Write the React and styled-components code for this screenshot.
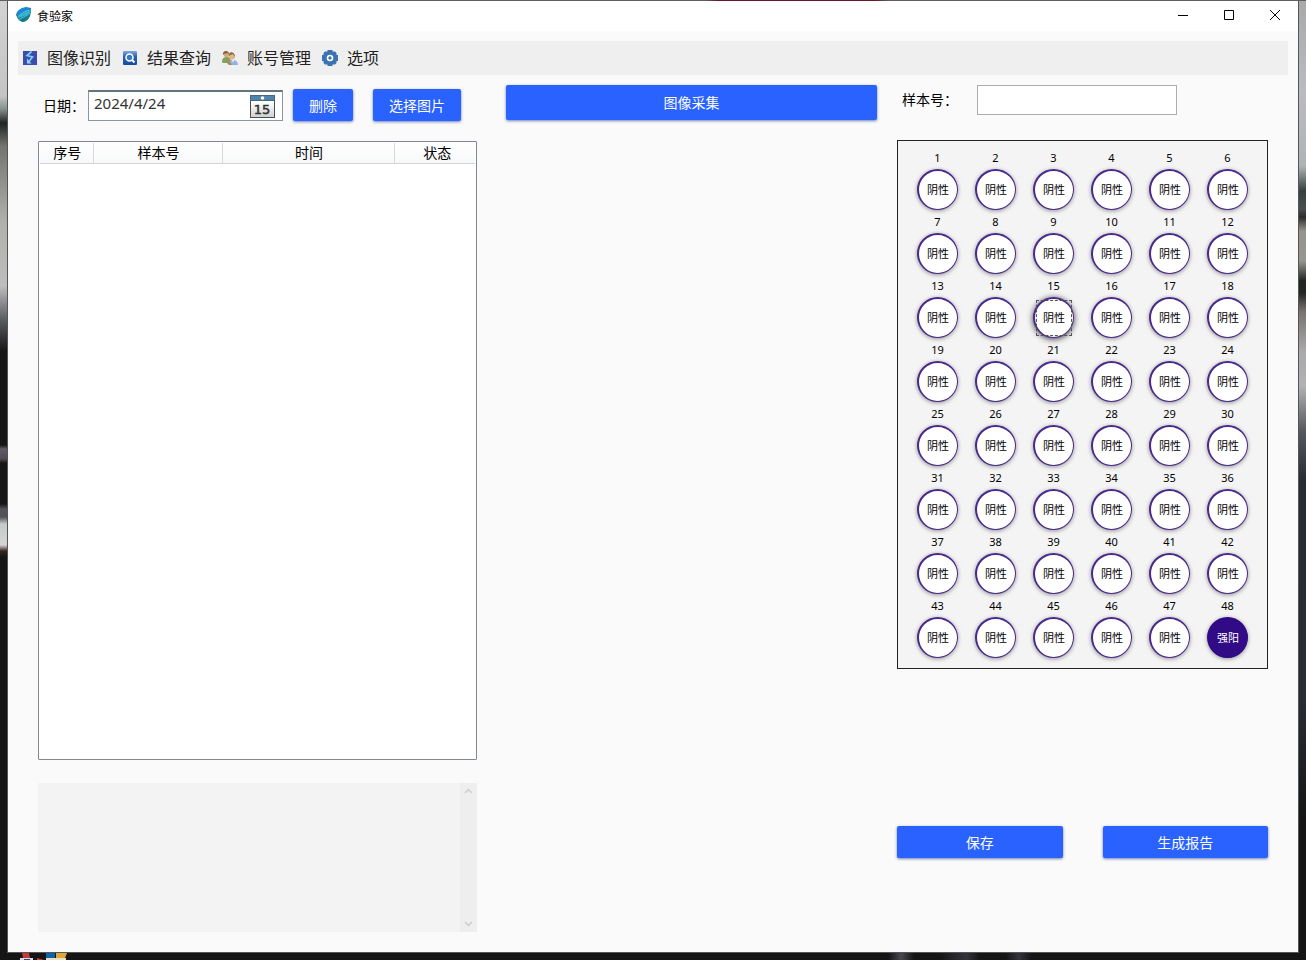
import React, { useState } from "react";
import styled, { createGlobalStyle, css } from "styled-components";

const wells = Array.from({ length: 48 }, (_, i) => ({
  no: i + 1,
  positive: i === 47,
}));

const columns = [
  { title: "序号", width: "53px" },
  { title: "样本号", width: "129px" },
  { title: "时间", width: "172px" },
  { title: "状态", width: "auto" },
];

//=================================
//       Icons
//=================================

const LogoIcon = () => (
  <svg width="16" height="16" viewBox="0 0 16 16">
    <path d="M0 8L1 5L3 3L6 1L10 0L15 1L15 5L14 9L12 12L10 14L7 15L4 14L2 12L1 10Z" fill="#1583a6" />
    <path d="M1 7L3 3L7 1L13 1L10 4L5 7L2 8Z" fill="#1788dd" />
    <path d="M2 11C5 6 11 6 15 2C15 7 8 9 2 11Z" fill="#37b7dc" />
    <path d="M3 13C7 11 12 10 14 7C14 11 11 14 7 15Z" fill="#127f7d" />
    <path d="M2 9.500C6 6 9 4.500 13 3" stroke="#9be3f0" strokeWidth=".7" fill="none" />
    <path d="M3 12.500C7 10 11 9 14 6" stroke="#6fd3cf" strokeWidth=".7" fill="none" />
  </svg>
);

const FlashIcon = () => (
  <svg width="16" height="16" viewBox="0 0 16 16">
    <rect x="1" y="1" width="14" height="14" fill="#3b4cab" />
    <path d="M9.500 1.500L5 5.500L10.500 7L6.500 12" fill="none" stroke="#7ecbfa" strokeWidth="1.700" />
    <path d="M5 8.500V13.500H9.500Z" fill="#8fd5ff" />
  </svg>
);

const SearchIcon = () => (
  <svg width="16" height="16" viewBox="0 0 16 16">
    <defs>
      <linearGradient id="searchBg" x2="0" y2="1">
        <stop stopColor="#82abdd" />
        <stop offset=".4" stopColor="#2a62b2" />
        <stop offset="1" stopColor="#164b9d" />
      </linearGradient>
    </defs>
    <rect x="1" y="1" width="14" height="14" rx="1" fill="url(#searchBg)" />
    <circle cx="7.500" cy="7.500" r="3.500" fill="#3c78c3" stroke="#fff" strokeWidth="1.500" />
    <path d="M10 10L12.500 12.500" stroke="#fff" strokeWidth="2" />
  </svg>
);

const UsersIcon = () => (
  <svg width="16" height="16" viewBox="0 0 16 16">
    <path d="M0 12C0 8 2 7 5 7C8 7 9 9 9 13H1Z" fill="#83a35c" />
    <circle cx="4.500" cy="4.500" r="2.800" fill="#d7a879" />
    <path d="M1 5C0 0 7 0 7 4L5 3L2 4Z" fill="#85613c" />
    <path d="M7 15C7 11 8 10 11 10C14 10 16 12 16 15Z" fill="#93b4d9" />
    <circle cx="10" cy="6.500" r="3" fill="#dfb587" />
    <path d="M7 6C6 1 13 1 13 7L11 4L8 5Z" fill="#896640" />
    <path d="M6 9L10 15L7 15L4 12Z" fill="#a88958" />
    <path d="M10 10L11 13L12 10Z" fill="#eef5f9" />
  </svg>
);

const GearIcon = () => (
  <svg width="16" height="16" viewBox="0 0 16 16">
    <path
      d="M5.500 0H10.500V1.500H12L13 1.500L14.500 3V5H16V11H14.500V13L13 14.500H10.500V16H5.500V14.500H3L1.500 13V11H0V5H1.500V3L3 1.500H5.500Z"
      fill="#3c72b4"
    />
    <circle cx="8" cy="8" r="2.500" fill="#3c72b4" stroke="#fff" strokeWidth="1.600" />
  </svg>
);

const CalendarIcon = () => (
  <svg width="26" height="26" viewBox="0 0 26 26">
    <defs>
      <linearGradient id="calendarPaper" x2="0" y2="1">
        <stop offset=".3" stopColor="#fff" />
        <stop offset="1" stopColor="#cfcfcf" />
      </linearGradient>
    </defs>
    <rect x="1.500" y="2.500" width="24" height="22" fill="url(#calendarPaper)" stroke="#4b4d50" />
    <rect x="1.500" y="2.500" width="24" height="5" fill="#5084ad" stroke="#466780" />
    <circle cx="13.500" cy="5" r="1.800" fill="#fff" />
    <text x="13" y="21" textAnchor="middle" fontFamily="DejaVu Sans" fontSize="13" fill="#333" stroke="#333" strokeWidth=".5">15</text>
  </svg>
);

const Arrow = ({ down }) => (
  <svg width="9" height="6" viewBox="0 0 9 6">
    <path d={down ? "M1 1L4.500 4.500L8 1" : "M1 5L4.500 1.500L8 5"} fill="none" stroke="#cecece" strokeWidth="1.500" />
  </svg>
);

const menus = [
  { text: "图像识别", icon: <FlashIcon /> },
  { text: "结果查询", icon: <SearchIcon /> },
  { text: "账号管理", icon: <UsersIcon /> },
  { text: "选项", icon: <GearIcon /> },
];

const App = () => {
  // State
  const [date, setDate] = useState("2024/4/24");
  const [sampleNo, setSampleNo] = useState("");
  const [current, setCurrent] = useState(15);

  return (
    <Desktop>
      <GlobalStyle />
      <TopEdge />
      <DesktopEdge $side="left" />
      <Window>
        <TitleBar>
          <LogoIcon />
          <Title>食验家</Title>
          <WindowButton aria-label="最小化">
            <svg width="10" height="10"><path d="M0 5.500H10" stroke="#000" /></svg>
          </WindowButton>
          <WindowButton aria-label="最大化">
            <svg width="10" height="10"><path d="M.5.5H9.500V9.500H.5Z" fill="none" stroke="#000" /></svg>
          </WindowButton>
          <WindowButton aria-label="关闭">
            <svg width="10" height="10"><path d="M0 0L10 10M10 0L0 10" stroke="#000" /></svg>
          </WindowButton>
        </TitleBar>

        <MenuBar>
          {menus.map((menu) => (
            <MenuButton key={menu.text}>
              {menu.icon}
              <MenuText>{menu.text}</MenuText>
            </MenuButton>
          ))}
        </MenuBar>

        <Content>
          <LeftPanel>
            <FilterRow>
              <FieldLabel htmlFor="date">日期：</FieldLabel>
              <DateBox>
                <DateInput id="date" value={date} onChange={(e) => setDate(e.target.value)} />
                <CalendarButton aria-label="打开日历"><CalendarIcon /></CalendarButton>
              </DateBox>
              <DeleteButton>删除</DeleteButton>
              <PickButton>选择图片</PickButton>
            </FilterRow>
            <TableFrame>
              <Table>
                <thead>
                  <tr>
                    {columns.map((col) => (
                      <HeadCell key={col.title} $width={col.width}>{col.title}</HeadCell>
                    ))}
                  </tr>
                </thead>
                <tbody />
              </Table>
            </TableFrame>
            <LogBox>
              <LogText aria-label="日志" readOnly />
              <ScrollBar>
                <Arrow />
                <Arrow down />
              </ScrollBar>
            </LogBox>
          </LeftPanel>

          <CenterPanel>
            <CaptureButton>图像采集</CaptureButton>
          </CenterPanel>

          <RightPanel>
            <SampleRow>
              <SampleLabel htmlFor="sample">样本号：</SampleLabel>
              <SampleInput id="sample" value={sampleNo} onChange={(e) => setSampleNo(e.target.value)} />
            </SampleRow>
            <WellGrid>
              {wells.map((well) => (
                <Well key={well.no}>
                  <WellNo>{well.no}</WellNo>
                  <WellButton
                    $positive={well.positive}
                    $current={well.no === current}
                    onClick={() => setCurrent(well.no)}
                  >
                    {well.positive ? "强阳" : "阴性"}
                  </WellButton>
                </Well>
              ))}
            </WellGrid>
            <ActionRow>
              <ActionButton>保存</ActionButton>
              <ActionButton>生成报告</ActionButton>
            </ActionRow>
          </RightPanel>
        </Content>
      </Window>
      <DesktopEdge $side="right" />
      <BottomEdge>
        <svg width="50" height="7" viewBox="0 0 50 7">
          <path d="M2 0H9L10 5H3Z" fill="#c43a3e" />
          <path d="M0 5H13V7H0Z" fill="#dadbe3" />
          <path d="M4 6H10V7H4Z" fill="#34456c" />
          <path d="M17 5L24 7H17Z" fill="#d83832" />
          <path d="M26 0H35V5H26Z" fill="#0b62ae" />
          <path d="M36 0H47L45 5H36Z" fill="#dda83b" />
          <path d="M26 5H46V7H26Z" fill="#e9dfbd" />
        </svg>
      </BottomEdge>
    </Desktop>
  );
};

//=================================
//       Styled-Component
//=================================

const GlobalStyle = createGlobalStyle`
  * {
    box-sizing: border-box;
  }
  body {
    margin: 0;
    color: #000;
    font-family: "Noto Sans CJK SC", sans-serif;
    font-size: 14px;
  }
  button, input, textarea {
    font: inherit;
    color: inherit;
    padding: 0;
    border: none;
    border-radius: 0;
  }
  button:focus, input:focus, textarea:focus {
    outline: none;
  }
  svg {
    display: block;
    flex: none;
  }
`;

const Desktop = styled.div`
  display: grid;
  grid-template-columns: 7px 1fr 7px;
  grid-template-rows: 1px 1fr 7px;
  min-height: 100vh;
  background: #151515;
`;

const TopEdge = styled.div`
  grid-column: 1 / -1;
  background: linear-gradient(90deg, #5f5f5f 54%, #6b1526 55%, #6b1526 67%, #5f5f5f 68%);
`;

const leftScene = css`
  background: linear-gradient(
    #d2d2d2 0, #c4c4c4 95px, #83928e 108px, #202624 122px, #73736f 145px,
    #b0b0ab 220px, #bdbdbd 285px, #55585c 320px, #171717 350px, #171717 444px,
    #625d65 448px, #514c54 458px, #161616 462px, #161616 503px, #56525a 508px,
    #56525a 516px, #c5cbc8 523px, #d4d4d4 544px, #3a2522 550px, #151515 556px
  );
`;

const rightScene = css`
  background: linear-gradient(
    #a9a9a9 0, #b9bbc1 90px, #b0b3b5 165px, #35413f 190px, #48504f 208px,
    #2a2c2b 216px, #96938c 230px, #969690 260px, #222423 280px, #252525 292px,
    #77716e 310px, #a9a9aa 350px, #b2b2b5 385px, #55585e 430px, #282b31 480px,
    #292c33 700px, #151515 820px
  );
`;

const DesktopEdge = styled.div`
  ${(props) => (props.$side === "left" ? leftScene : rightScene)}
`;

const BottomEdge = styled.div`
  grid-column: 1 / -1;
  padding-left: 20px;
  background: linear-gradient(
    90deg, transparent 68%, #4a4850 69%, transparent 70%, transparent 72%,
    #34323c 74%, transparent 75%, transparent 77%, #34323c 78%, transparent 79%
  );
`;

const Window = styled.main`
  display: flex;
  flex-direction: column;
  background: #fafafa;
  border: solid #555;
  border-width: 0 1px 1px;
`;

const TitleBar = styled.header`
  display: flex;
  align-items: center;
  height: 30px;
  padding: 0 0 2px 8px;
  background: #fff;
`;

const Title = styled.h1`
  margin: 0 auto 0 5px;
  font-size: 12px;
  font-weight: 400;
`;

const WindowButton = styled.button`
  display: flex;
  align-items: center;
  justify-content: center;
  width: 46px;
  height: 28px;
  background: none;
`;

const MenuBar = styled.nav`
  display: flex;
  gap: 11px;
  height: 34px;
  margin: 10px 10px 0;
  padding-left: 4px;
  background: #efefef;
`;

const MenuButton = styled.button`
  display: flex;
  align-items: center;
  gap: 9px;
  font-size: 16px;
  color: #222;
  background: none;
`;

const MenuText = styled.span`
  padding-bottom: 3px;
`;

const Content = styled.div`
  display: grid;
  grid-template-columns: 439px 1fr 371px;
  flex: 1;
  padding: 10px 30px 20px;
`;

const LeftPanel = styled.section`
  display: flex;
  flex-direction: column;
`;

const FilterRow = styled.div`
  display: flex;
  align-items: center;
  height: 40px;
  padding-left: 5px;
`;

const FieldLabel = styled.label`
  white-space: nowrap;
`;

const SampleLabel = styled(FieldLabel)`
  padding-bottom: 2px;
`;

const DateBox = styled.div`
  display: flex;
  width: 195px;
  height: 31px;
  margin-left: 3px;
  background: #fff;
  border: 1px solid #8796a2;
  border-top: 2px solid #647580;
`;

const DateInput = styled.input`
  flex: 1;
  min-width: 0;
  height: 22px;
  padding-left: 5px;
  font-family: "Noto Sans", sans-serif;
  font-size: 15px;
  color: #333;
  background: none;
`;

const CalendarButton = styled.button`
  width: 26px;
  margin-right: 7px;
  background: none;
`;

const BlueButton = styled.button`
  height: 32px;
  color: white;
  background: #2962ff;
  border-radius: 2px;
  box-shadow: 0 1px 3px rgba(20, 50, 130, 0.6);
`;

const DeleteButton = styled(BlueButton)`
  width: 60px;
  margin-left: 10px;
`;

const PickButton = styled(BlueButton)`
  width: 88px;
  margin-left: 20px;
`;

const TableFrame = styled.div`
  flex: 1;
  margin-top: 16px;
  padding: 1px;
  background: #fff;
  border: 1px solid #828790;
  border-radius: 1px;
`;

const Table = styled.table`
  width: 100%;
  table-layout: fixed;
  border-collapse: collapse;
`;

const HeadCell = styled.th`
  width: ${(props) => props.$width};
  height: 20px;
  padding: 0 0 1px 2px;
  font-weight: 400;
  line-height: 19px;
  background: linear-gradient(#fff, #f7f8f9);
  border-right: 1px solid #d9d9d9;
  border-bottom: 1px solid #d5d5d5;
  &:last-child {
    padding-left: 5px;
    border-right: none;
  }
`;

const LogBox = styled.div`
  display: flex;
  height: 149px;
  margin-top: 23px;
  background: #f3f3f3;
`;

const LogText = styled.textarea`
  flex: 1;
  resize: none;
  background: none;
`;

const ScrollBar = styled.div`
  display: flex;
  flex-direction: column;
  align-items: center;
  justify-content: space-between;
  width: 17px;
  padding: 5px 0;
  background: #eee;
`;

const CenterPanel = styled.section`
  padding: 0 20px 0 29px;
`;

const CaptureButton = styled(BlueButton)`
  width: 100%;
  height: 35px;
  padding-bottom: 2px;
`;

const RightPanel = styled.section`
  display: flex;
  flex-direction: column;
`;

const SampleRow = styled.div`
  display: flex;
  align-items: center;
  height: 30px;
  padding-left: 5px;
`;

const SampleInput = styled.input`
  width: 200px;
  height: 30px;
  margin-left: 19px;
  padding: 0 5px;
  background: #fff;
  border: 1px solid #abadb3;
`;

const WellGrid = styled.div`
  display: grid;
  grid-template-columns: repeat(6, 58px);
  grid-auto-rows: 64px;
  justify-content: center;
  height: 529px;
  margin-top: 25px;
  padding-top: 9px;
  background: #f4f4f4;
  border: 1px solid #222;
`;

const Well = styled.div`
  display: flex;
  flex-direction: column;
  align-items: center;
`;

const WellNo = styled.span`
  height: 19px;
  font-family: "Noto Sans", sans-serif;
  font-size: 11px;
  line-height: 15px;
`;

const WellButton = styled.button`
  position: relative;
  width: 41px;
  height: 41px;
  padding-bottom: 2px;
  font-size: 11px;
  color: ${(props) => (props.$positive ? "#fff" : "#000")};
  background: ${(props) => (props.$positive ? "#310a86" : "#fff")};
  border: solid ${(props) => (props.$positive ? "#310a86" : "#4a2a8c")};
  border-width: 2px 1px 1px 2px;
  border-radius: 50%;
  box-shadow: 0 1px 4px rgba(0, 0, 0, 0.4);
  ${(props) =>
    props.$current &&
    css`
      box-shadow: 0 1px 6px rgba(0, 0, 0, 0.8);
      &::after {
        content: "";
        position: absolute;
        inset: 1px;
        border: 1px dashed #555;
      }
    `}
`;

const ActionRow = styled.div`
  display: flex;
  gap: 40px;
  margin-top: auto;
  margin-bottom: 74px;
`;

const ActionButton = styled(BlueButton)`
  flex: 1;
`;

export default App;
